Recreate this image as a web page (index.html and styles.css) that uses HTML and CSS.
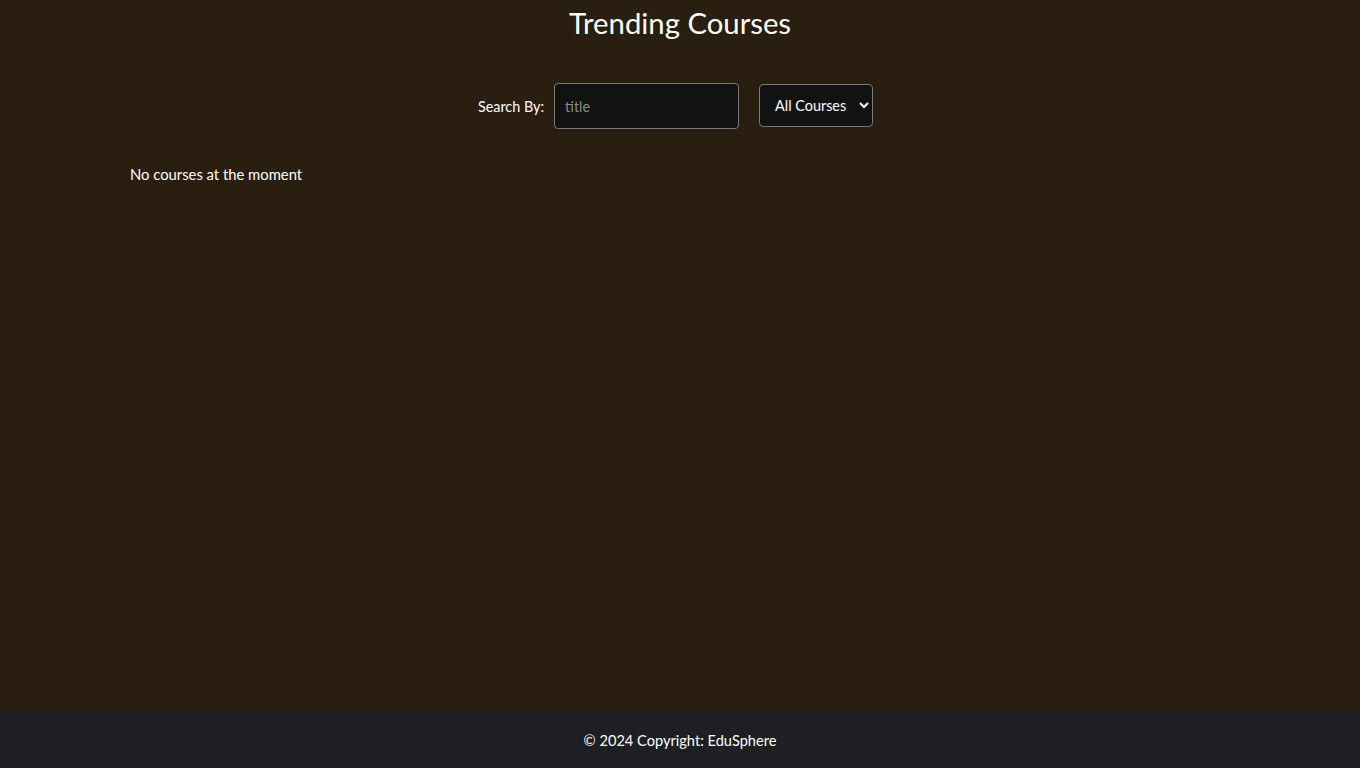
FILE: index.html
```html
<!DOCTYPE html>
<html>
<head>
<meta charset="utf-8">
<link rel="stylesheet" href="styles.css">
</head>
<body>
<div class="page">
  <main class="main">
    <h1 class="title">Trending Courses</h1>
    <div class="filters">
      <label class="label" for="q">Search By:</label>
      <input class="search" id="q" type="text" placeholder="title">
      <select class="select">
        <option>All Courses</option>
      </select>
    </div>
    <p class="empty">No courses at the moment</p>
  </main>
  <footer class="footer">© 2024 Copyright: EduSphere</footer>
</div>
</body>
</html>
```
FILE: styles.css
```css
html, body {
  margin: 0;
  padding: 0;
  height: 100%;
}
body {
  background: #291e10;
  color: #f2f2f2;
  font-family: Lato, "Open Sans", sans-serif;
}
.page {
  min-height: 100%;
  display: flex;
  flex-direction: column;
}
.main {
  flex: 1;
}
.title {
  margin: 0;
  padding-top: 5px;
  text-align: center;
  font-weight: 400;
  font-size: 29.3px;
  line-height: 36px;
  color: #ffffff;
}
.filters {
  display: flex;
  justify-content: center;
  align-items: center;
  margin-top: 42px;
  padding-right: 9px;
}
.label {
  font-size: 14.4px;
  margin-right: 10px;
  color: #ffffff;
}
.search {
  box-sizing: border-box;
  width: 185px;
  height: 46px;
  background: #121212;
  border: 1px solid #7a7a7a;
  border-radius: 4px;
  color: #fff;
  font-family: inherit;
  font-size: 14.4px;
  padding: 0 10px;
  margin-right: 20px;
  outline: none;
}
.search::placeholder {
  color: #8a8a8a;
}
.select {
  box-sizing: border-box;
  width: 114px;
  height: 43px;
  margin-bottom: 2px;
  background: #121212;
  border: 1px solid #7a7a7a;
  border-radius: 4px;
  color: #fff;
  font-family: inherit;
  font-size: 14.4px;
  padding: 0 2px 0 11px;
}
.empty {
  margin: 36px 0 0 130px;
  font-size: 14.8px;
  color: #ffffff;
}
.footer {
  height: 56px;
  background: #1e1f23;
  display: flex;
  align-items: center;
  justify-content: center;
  font-size: 14.6px;
  color: #ffffff;
}
```
